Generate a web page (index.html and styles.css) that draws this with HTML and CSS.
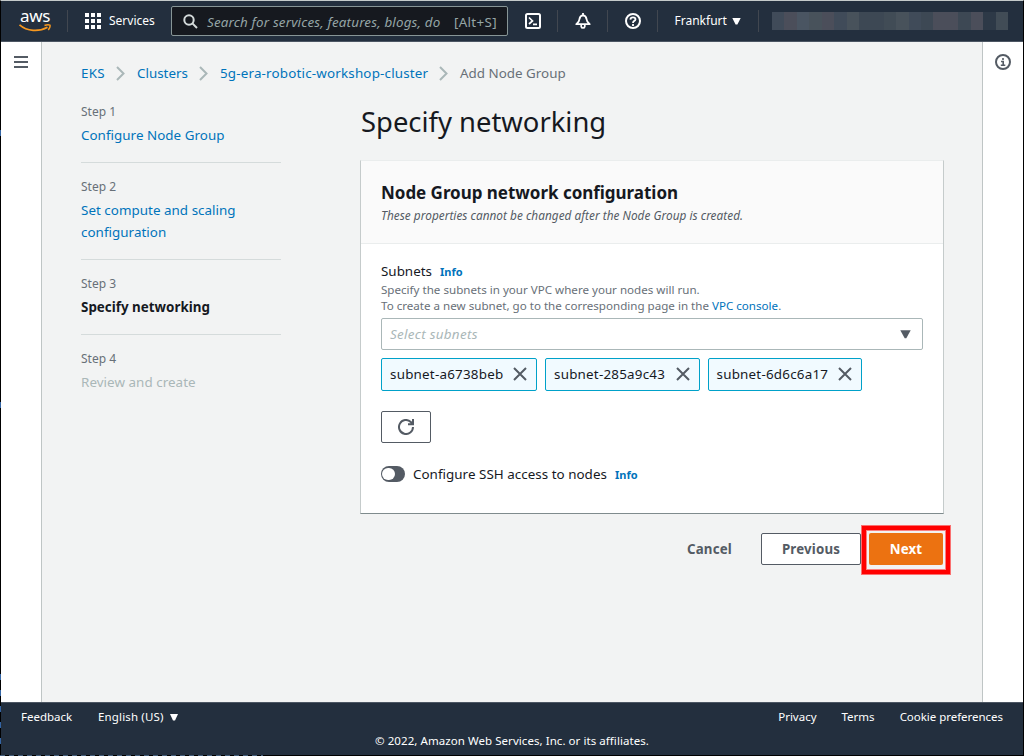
FILE: index.html
```html
<!DOCTYPE html>
<html lang="en">
<head>
<meta charset="utf-8">
<title>Add Node Group</title>
<link rel="stylesheet" href="styles.css">
</head>
<body>
<div class="window">
  <header class="topbar">
    <div class="logo">
      <span class="logo-text">aws</span>
      <svg class="logo-smile" width="33" height="9" viewBox="0 0 33 9"><path d="M0.500 0.800C8 7.500 20 8 28.500 3.200" fill="none" stroke="#f7981f" stroke-width="1.800"/><path d="M25.500 1.500Q29 0.200 31 1.200Q31.500 3 29.300 6" fill="none" stroke="#f7981f" stroke-width="1.500"/></svg>
    </div>
    <span class="divider"></span>
    <svg class="grid-icon" width="16" height="16" viewBox="0 0 16 16" fill="#fff"><path d="M0 0h4v4H0zM6 0h4v4H6zM12 0h4v4h-4zM0 6h4v4H0zM6 6h4v4H6zM12 6h4v4h-4zM0 12h4v4H0zM6 12h4v4H6zM12 12h4v4h-4z"/></svg>
    <span class="services">Services</span>
    <div class="search">
      <svg width="15" height="15" viewBox="0 0 15 15" fill="none" stroke="#d5dbdb" stroke-width="2"><circle cx="6" cy="6" r="4.700"/><path d="M9.400 9.400L14 14"/></svg>
      <span class="search-hint">Search for services, features, blogs, do</span>
      <span class="shortcut">[Alt+S]</span>
    </div>
    <svg class="tool" width="16" height="16" viewBox="0 0 16 16" fill="none" stroke="#fff" stroke-width="2"><rect x="1" y="1" width="14" height="14" rx="1.500"/><path d="M4 4.500L7.500 8L4 11M8 11.300h4" stroke-width="1.700"/></svg>
    <span class="divider"></span>
    <svg class="tool" width="16" height="16" viewBox="0 0 16 16" fill="none" stroke="#fff" stroke-width="1.800" stroke-linejoin="round"><path d="M8 0v2M1.300 11.200Q4.300 9 4.500 6Q5 2.500 8 2.300Q11 2.500 11.500 6Q11.700 9 14.700 11.200Z"/><path d="M6.200 12v1.500Q6.500 15 8 15T9.800 13.500V12" stroke-width="1.700"/></svg>
    <span class="divider"></span>
    <svg class="tool" width="16" height="16" viewBox="0 0 16 16" fill="none" stroke="#fff" stroke-width="2"><circle cx="8" cy="8" r="7"/><path d="M5.400 6.600Q5.500 4.300 8 4.300T10.500 6.400Q10.400 7.300 9.300 7.900Q8 8.600 8 10M8 11v2" stroke-width="1.800"/></svg>
    <span class="divider"></span>
    <span class="region">Frankfurt</span>
    <svg class="caret" width="9" height="7" viewBox="0 0 9 7"><path d="M0.300 0h8.400L5.400 6.600H3.600Z" fill="#fff"/></svg>
    <span class="divider"></span>
    <div class="account"><i class="t1"></i><i class="t2"></i><i class="t3"></i><i class="t4"></i><i class="t2"></i><i class="t1"></i><i class="t4"></i><i class="t5"></i><i class="t5"></i><i class="t6"></i><i class="t4"></i><i class="t1"></i><i class="t5"></i><i class="t2"></i><i class="t2"></i><i class="t5"></i><i class="t2"></i><i class="t7"></i><i class="t6"></i></div>
  </header>

  <main class="body">
    <aside class="rail">
      <svg width="14" height="12" viewBox="0 0 14 12" fill="#545b64"><path d="M0 0h14v2H0zM0 5h14v2H0zM0 10h14v2H0z"/></svg>
    </aside>
    <div class="content">
      <nav class="breadcrumbs">
        <a class="crumb-service">EKS</a>
        <svg width="9" height="15" viewBox="0 0 9 15"><path d="M1 1L7.500 7.500L1 14"/></svg>
        <a class="crumb-clusters">Clusters</a>
        <svg width="9" height="15" viewBox="0 0 9 15"><path d="M1 1L7.500 7.500L1 14"/></svg>
        <a class="crumb-name">5g-era-robotic-workshop-cluster</a>
        <svg width="9" height="15" viewBox="0 0 9 15"><path d="M1 1L7.500 7.500L1 14"/></svg>
        <span>Add Node Group</span>
      </nav>
      <div class="wizard">
        <ol class="steps">
          <li><small>Step 1</small><a>Configure Node Group</a></li>
          <li><small>Step 2</small><a>Set compute and scaling configuration</a></li>
          <li><small>Step 3</small><b>Specify networking</b></li>
          <li><small>Step 4</small><span class="pending">Review and create</span></li>
        </ol>
        <section class="form">
          <h1>Specify networking</h1>
          <div class="panel">
            <div class="panel-head">
              <h2>Node Group network configuration</h2>
              <p>These properties cannot be changed after the Node Group is created.</p>
            </div>
            <div class="panel-body">
              <div class="label"><span>Subnets</span><a class="info">Info</a></div>
              <p class="help">Specify the subnets in your VPC where your nodes will run.<br>To create a new subnet, go to the corresponding page in the <a>VPC console</a>.</p>
              <div class="select"><span>Select subnets</span><svg width="11" height="9" viewBox="0 0 11 9"><path d="M0.300 0.300h10.400L6.300 8.300H4.700Z" fill="#545b64"/></svg></div>
              <div class="tokens">
                <div class="token token-a"><span>subnet-a6738beb</span><svg width="14" height="14" viewBox="0 0 14 14"><path d="M1 1L13 13M13 1L1 13"/></svg></div>
                <div class="token token-b"><span>subnet-285a9c43</span><svg width="14" height="14" viewBox="0 0 14 14"><path d="M1 1L13 13M13 1L1 13"/></svg></div>
                <div class="token token-c"><span>subnet-6d6c6a17</span><svg width="14" height="14" viewBox="0 0 14 14"><path d="M1 1L13 13M13 1L1 13"/></svg></div>
              </div>
              <div class="refresh"><svg width="16" height="16" viewBox="0 0 16 16" fill="none" stroke="#545b64" stroke-width="2"><path d="M15 8A7 7 0 1 1 12.800 2.900L15 5M15 0v5.200H10"/></svg></div>
              <div class="ssh"><span class="toggle"><i></i></span><span class="ssh-text">Configure SSH access to nodes</span><a class="info">Info</a></div>
            </div>
          </div>
          <div class="actions">
            <span class="cancel">Cancel</span>
            <div class="previous">Previous</div>
            <div class="next">Next</div>
          </div>
        </section>
      </div>
    </div>
    <aside class="rail rail-right">
      <svg width="16" height="16" viewBox="0 0 16 16" fill="none" stroke="#545b64" stroke-width="2"><circle cx="8" cy="8" r="7"/><path d="M8 4v2M6 7.500h2.200V11M5.800 11.200h4.500" stroke-width="1.600"/></svg>
    </aside>
  </main>

  <footer class="footer">
    <div class="footer-links">
      <span class="feedback">Feedback</span>
      <span class="language">English (US)</span>
      <svg width="8" height="7" viewBox="0 0 8 7"><path d="M0 0h8L5 6.500H3Z" fill="#fff"/></svg>
      <span class="privacy">Privacy</span>
      <span class="terms">Terms</span>
      <span class="cookies">Cookie preferences</span>
    </div>
    <div class="copyright">© 2022, Amazon Web Services, Inc. or its affiliates.</div>
  </footer>
</div>
</body>
</html>
```

FILE: styles.css
```css
* { box-sizing: border-box; }
body { margin: 0; background: #000; font: 13.400px/22px "Noto Sans", sans-serif; letter-spacing: 0; color: #16191f; }
h1, h2, p, ol { margin: 0; padding: 0; }
svg { display: block; flex: none; }
a { color: #0073bb; }
i { display: block; }
span, b, a { white-space: nowrap; }

.window {
  display: flex; flex-direction: column; width: 1024px; height: 756px;
  border: 1px solid transparent; border-top-color: #c5cbcb;
  background-color: #000; background-origin: border-box; background-repeat: no-repeat;
  background-image:
    linear-gradient(#3465a4, #3465a4), linear-gradient(#3465a4, #3465a4),
    repeating-linear-gradient(#3465a4 0 6px, #000 6px 16px),
    repeating-linear-gradient(90deg, #455f7c 0 5px, #000 5px 9px);
  background-size: 1px 6px, 1px 6px, 1px 80px, 263px 1px;
  background-position: 0 130px, 0 402px, 0 674px, 0 755px;
}

.topbar { display: flex; align-items: center; height: 41px; padding-left: 18px; background: #232f3e; border-bottom: 1px solid #4c5663; color: #fff; font-size: 12px; }
.logo { width: 33px; height: 24px; }
.logo-text { display: block; height: 15px; line-height: 14px; font-size: 17px; letter-spacing: -0.3px; margin-left: -1px; text-align: center; color: #fff; }
.divider { width: 1px; height: 22px; background: #414750; flex: none; }
.logo + .divider { margin: 0 17px 0 15px; }
.services { width: 62px; margin-left: 8px; }
.search { display: flex; align-items: center; width: 337px; height: 30px; padding: 0 10px 0 11px; margin-right: 17px; background: #16191f; border: 1px solid #879596; border-radius: 2px; color: #95a5a6; font-size: 13.400px; }
.search-hint { width: 237px; margin: 1px 0 0 9px; font-style: italic; letter-spacing: 0.17px; }
.shortcut { margin: 1px 0 0 auto; letter-spacing: 0.35px; }
.tool { margin-right: 16px; }
.divider + .tool { margin-left: 17px; }
.region { width: 52px; margin-left: 16px; padding-left: 0.500px; }
.caret { margin: 0 17px 0 6px; }
.account { display: flex; width: 236px; height: 18px; margin-left: 13px; }
.account i { flex: 1; }
.t1 { background: #404b59; } .t2 { background: #4b4e5a; } .t3 { background: #4a5562; }
.t4 { background: #48525b; } .t5 { background: #3d4854; } .t6 { background: #414c56; } .t7 { background: #2d3947; }

.body { display: flex; height: 660px; }
.rail { width: 41px; padding: 14px 0 0 13px; background: #fff; border-right: 1px solid #bfc5c5; }
.rail-right { width: 41px; padding: 12px 0 0 12px; border: 0; border-left: 1px solid #bfc5c5; }
.content { flex: 1; padding: 20px 39px 0; background: #f2f3f3; }

.breadcrumbs { display: flex; align-items: center; height: 22px; color: #687078; }
.breadcrumbs svg { margin: 0 12px 0 11px; fill: none; stroke: #aab7b8; stroke-width: 2; }
.crumb-service { width: 24px; letter-spacing: 0.3px; }
.crumb-clusters { width: 51px; }
.crumb-name { width: 208px; letter-spacing: 0.18px; }

.wizard { display: flex; }
.steps { width: 200px; margin-right: 79px; padding-top: 16px; list-style: none; }
.steps li { display: flex; flex-direction: column; padding-bottom: 16px; margin-bottom: 12px; border-bottom: 1px solid #d5dbdb; }
.steps li:last-child { border: 0; }
.steps small { font-size: 12px; line-height: 23px; height: 24px; color: #687078; }
.steps a { white-space: normal; letter-spacing: 0.03px; }
.steps .pending { color: #aab7b8; letter-spacing: 0.05px; }

.form { width: 584px; margin-right: -3px; }
h1 { height: 76px; padding: 20px 0 0 1px; font-size: 27.400px; line-height: 36px; font-weight: 400; }
.panel { height: 354px; background: #fff; border: 1px solid #c5cbcb; border-top-color: #eaeded; border-bottom-color: #7f8b8d; }
.panel-head { height: 83px; padding: 20px 20px 0; background: #fafafa; border-bottom: 1px solid #eaeded; }
.panel-head h2 { font-size: 17px; line-height: 24px; font-weight: 700; letter-spacing: -0.03px; }
.panel-head p { font-size: 11.800px; line-height: 20px; letter-spacing: 0.03px; font-style: italic; color: #545b64; }
.panel-body { padding: 16px 20px 0; }
.label, .ssh { display: flex; align-items: center; height: 21px; }
.label { height: 22px; }
.info { margin-left: 8px; padding-top: 1px; font-size: 11px; font-weight: 700; }
.help { font-size: 11.600px; line-height: 16px; color: #687078; }
.select { display: flex; align-items: center; justify-content: space-between; height: 32px; margin-top: 4px; padding: 0 11px 0 8px; border: 1px solid #aab7b8; border-radius: 2px; color: #aab7b8; font-style: italic; letter-spacing: 0.3px; }
.tokens { display: flex; gap: 8px; margin-top: 8px; }
.token { display: flex; align-items: center; justify-content: space-between; height: 33px; padding: 0 9px 2px 8px; background: #f1faff; border: 1px solid #00a1c9; border-radius: 2px; letter-spacing: 0.22px; }
.token svg { stroke: #545b64; stroke-width: 2; }
.token-a { width: 156px; } .token-b { width: 155px; } .token-c { width: 154px; padding-left: 7.500px; }
.refresh { display: flex; align-items: center; justify-content: center; width: 50px; height: 32px; margin-top: 20px; border: 1px solid #545b64; border-radius: 2px; }
.ssh { margin-top: 20px; letter-spacing: 0.03px; }
.ssh .info { padding-top: 2px; }
.toggle { width: 24px; height: 16px; padding: 2px 1px; margin-right: 8px; border-radius: 8px; background: #545b64; }
.toggle i { width: 13px; height: 12px; border-radius: 6px; background: #fff; }

.actions { display: flex; align-items: center; justify-content: flex-end; height: 32px; margin-top: 19px; padding-right: 1px; font-weight: 700; font-size: 13.300px; letter-spacing: 0.17px; color: #545b64; }
.cancel { width: 45px; margin-right: 29px; }
.previous { width: 100px; height: 32px; margin-right: 8px; line-height: 30px; text-align: center; background: #fff; border: 1px solid #545b64; border-radius: 2px; }
.next { position: relative; width: 74px; height: 32px; border-radius: 2px; background: #ec7211; color: #fff; line-height: 32px; text-align: center; }
.next::after { content: ""; position: absolute; inset: -8px -8px -10px; border: 1px solid #fa7070; box-shadow: inset 0 0 0 4px #f00, inset 0 0 0 5px #fa8080; }

.footer { height: 53px; padding: 0 20px; background: #232f3e; border-top: 1px solid #4c5663; color: #fff; font-size: 11.500px; }
.footer-links { display: flex; align-items: center; height: 28px; }
.feedback { width: 51px; margin-right: 26px; }
.language { width: 67px; margin-right: 5px; letter-spacing: 0.15px; }
.privacy { margin-left: auto; }
.terms { margin: 0 25px; }
.cookies { letter-spacing: -0.03px; }
.copyright { line-height: 20px; text-align: center; letter-spacing: 0.06px; }
```
